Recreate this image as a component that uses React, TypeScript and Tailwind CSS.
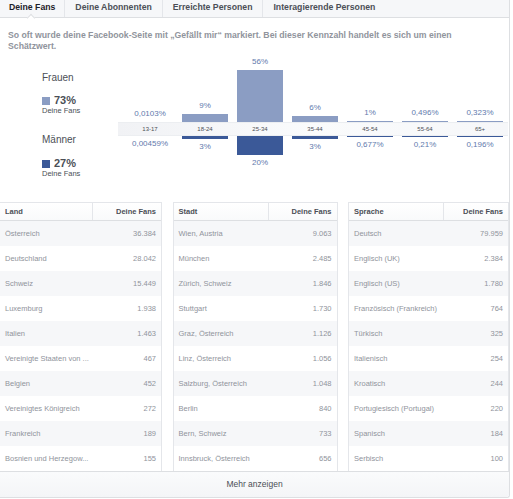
import React from "react";

const ages = [
  { a: "13-17", f: 0.0103, fl: "0,0103%", m: 0.00459, ml: "0,00459%" },
  { a: "18-24", f: 9, fl: "9%", m: 3, ml: "3%" },
  { a: "25-34", f: 56, fl: "56%", m: 20, ml: "20%" },
  { a: "35-44", f: 6, fl: "6%", m: 3, ml: "3%" },
  { a: "45-54", f: 1, fl: "1%", m: 0.677, ml: "0,677%" },
  { a: "55-64", f: 0.496, fl: "0,496%", m: 0.21, ml: "0,21%" },
  { a: "65+", f: 0.323, fl: "0,323%", m: 0.196, ml: "0,196%" },
];

const h = (p: number) => (p < 0.1 ? 0 : Math.max(1, Math.round(p * 0.93)));

const tables = [
  {
    title: "Land",
    w: "w-[162px]",
    col: "w-[93px]",
    rows: [
      ["Österreich", "36.384"],
      ["Deutschland", "28.042"],
      ["Schweiz", "15.449"],
      ["Luxemburg", "1.938"],
      ["Italien", "1.463"],
      ["Vereinigte Staaten von ...", "467"],
      ["Belgien", "452"],
      ["Vereinigtes Königreich", "272"],
      ["Frankreich", "189"],
      ["Bosnien und Herzegow...", "155"],
    ],
  },
  {
    title: "Stadt",
    w: "w-[165px] border-l",
    col: "w-[95px]",
    rows: [
      ["Wien, Austria", "9.063"],
      ["München", "2.485"],
      ["Zürich, Schweiz", "1.846"],
      ["Stuttgart", "1.730"],
      ["Graz, Österreich", "1.126"],
      ["Linz, Österreich", "1.056"],
      ["Salzburg, Österreich", "1.048"],
      ["Berlin", "840"],
      ["Bern, Schweiz", "733"],
      ["Innsbruck, Österreich", "656"],
    ],
  },
  {
    title: "Sprache",
    w: "w-[161px] border-l",
    col: "w-[95px]",
    rows: [
      ["Deutsch", "79.959"],
      ["Englisch (UK)", "2.384"],
      ["Englisch (US)", "1.780"],
      ["Französisch (Frankreich)", "764"],
      ["Türkisch", "325"],
      ["Italienisch", "254"],
      ["Kroatisch", "244"],
      ["Portugiesisch (Portugal)", "220"],
      ["Spanisch", "184"],
      ["Serbisch", "100"],
    ],
  },
];

const tabs = ["Deine Fans", "Deine Abonnenten", "Erreichte Personen", "Interagierende Personen"];

export default function App() {
  return (
    <div className="w-[513px] h-[499px] bg-white font-['Liberation_Sans',Arial,sans-serif] overflow-hidden">
      <div className="w-[510px] border-r border-b border-[#dddfe2] rounded-br-[3px]">
        {/* Tabs */}
        <div className="relative h-[18px] bg-[#f6f7f9] border-b border-[#dddfe2] flex">
          {tabs.map((t, i) => (
            <div
              key={t}
              className={
                "relative h-full flex items-center pb-[2px] text-[8.7px] font-bold " +
                (i < tabs.length - 1 ? "border-r border-[#e4e6ea] " : "") +
                (i === 0 ? "pl-[9px] pr-[9px] text-[#1d2129]" : "px-[10px] text-[#4b4f56]")
              }
            >
              {t}
              {i === 0 && (
                <span className="absolute left-[28px] bottom-[-4px] w-[6px] h-[6px] bg-white border-l border-t border-[#dddfe2] rotate-45" />
              )}
            </div>
          ))}
        </div>

        {/* Description */}
        <p className="pt-[12px] pl-[8px] w-[475px] text-[8.7px] font-bold leading-[11px] text-[#90949c]">
          So oft wurde deine Facebook-Seite mit „Gefällt mir“ markiert. Bei dieser Kennzahl handelt es sich um einen
          Schätzwert.
        </p>

        {/* Chart */}
        <div className="flex h-[124px]">
          <div className="w-[118px] pl-[42px] pt-[20px]">
            <div className="text-[10px] leading-[12px] text-[#4b4f56]">Frauen</div>
            <div className="mt-[10px] flex items-center gap-[4px]">
              <span className="w-[8px] h-[8px] mt-[2px] bg-[#8b9dc3]" />
              <span className="text-[11px] leading-[12px] font-bold text-[#4b4f56]">73%</span>
            </div>
            <div className="text-[7.5px] leading-[9px] text-[#4b4f56]">Deine Fans</div>
            <div className="mt-[19px] text-[10px] leading-[12px] text-[#4b4f56]">Männer</div>
            <div className="mt-[11px] flex items-center gap-[4px]">
              <span className="w-[8px] h-[8px] mt-[2px] bg-[#3b5998]" />
              <span className="text-[11px] leading-[12px] font-bold text-[#4b4f56]">27%</span>
            </div>
            <div className="text-[7.5px] leading-[9px] text-[#4b4f56]">Deine Fans</div>
          </div>
          <div className="w-[390px] flex flex-col">
            <div className="h-[70px] flex items-end pl-[9px] gap-[9px]">
              {ages.map((d) => (
                <div key={d.a} className="w-[46px] flex flex-col items-center justify-end">
                  <span className="text-[8px] leading-[10px] text-[#627aad] mb-[3px]">{d.fl}</span>
                  <div className="w-full bg-[#8b9dc3]" style={{ height: h(d.f) }} />
                </div>
              ))}
            </div>
            <div className="h-[14px] flex items-center pl-[9px] gap-[9px] bg-gradient-to-r from-[#f1f2f5] via-[#fafbfc] to-[#f6f7f9] border-y border-[#eceef1]">
              {ages.map((d) => (
                <span key={d.a} className="w-[46px] text-center text-[6px] leading-[8px] text-[#4b4f56]">
                  {d.a}
                </span>
              ))}
            </div>
            <div className="flex items-start pl-[9px] gap-[9px]">
              {ages.map((d) => (
                <div key={d.a} className="w-[46px] flex flex-col items-center">
                  <div className="w-full bg-[#3b5998]" style={{ height: h(d.m) }} />
                  <span className="text-[8px] leading-[10px] text-[#627aad] mt-[3px]">{d.ml}</span>
                </div>
              ))}
            </div>
          </div>
        </div>

        {/* Tables */}
        <div className="mt-[26px] flex justify-between">
          {tables.map((t) => (
            <div key={t.title} className={t.w + " border-r border-[#e4e6ea] border-t"}>
              <div className="h-[18px] flex items-center border-b border-[#dddfe2] bg-gradient-to-b from-white to-[#f9fafb] text-[7.5px] font-bold text-[#4b4f56]">
                <div className={t.col + " h-full flex items-center pl-[5px] border-r border-[#e4e6ea]"}>{t.title}</div>
                <div className="flex-1 text-right pr-[5px]">Deine Fans</div>
              </div>
              {t.rows.map((r, i) => (
                <div
                  key={r[0]}
                  className={
                    "h-[25px] flex items-center justify-between px-[5px] text-[7.5px] text-[#90949c] " +
                    (i % 2 === 0 ? "bg-[#f6f7f9]" : "bg-white")
                  }
                >
                  <span>{r[0]}</span>
                  <span>{r[1]}</span>
                </div>
              ))}
            </div>
          ))}
        </div>

        {/* Footer */}
        <div className="h-[26px] flex items-center justify-center border-t border-[#dddfe2] bg-gradient-to-b from-[#fafbfc] to-[#f4f5f7] rounded-br-[3px] text-[8.5px] text-[#4b4f56]">
          Mehr anzeigen
        </div>
      </div>
    </div>
  );
}
